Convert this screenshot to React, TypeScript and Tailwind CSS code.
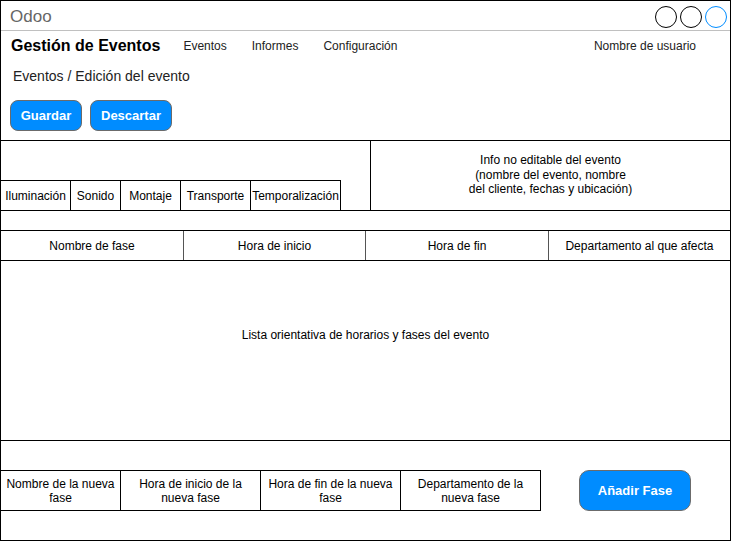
import React from 'react';

const tabs = [
    { label: 'Iluminación', w: 'w-[70px]' },
    { label: 'Sonido', w: 'w-[50px]' },
    { label: 'Montaje', w: 'w-[60px]' },
    { label: 'Transporte', w: 'w-[70px]' },
    { label: 'Temporalización', w: 'w-[90px]' },
];

const columns = [
    { label: 'Nombre de fase', w: 'w-[183px] border-r' },
    { label: 'Hora de inicio', w: 'w-[182px] border-r' },
    { label: 'Hora de fin', w: 'w-[183px] border-r' },
    { label: 'Departamento al que afecta', w: 'flex-1' },
];

const newPhase = [
    { label: ['Nombre de la nueva', 'fase'], w: 'w-[120px]' },
    { label: ['Hora de inicio de la', 'nueva fase'], w: 'w-[140px]' },
    { label: ['Hora de fin de la nueva', 'fase'], w: 'w-[140px]' },
    { label: ['Departamento de la', 'nueva fase'], w: 'w-[140px]' },
];

const App: React.FC = () => {
    return (
        <div className="w-[731px] h-[541px] border border-black bg-white flex flex-col text-black font-['Liberation_Sans',Arial,sans-serif]">
            {/* Window bar */}
            <div className="h-[30px] shrink-0 border-b border-[#c0c0c0] flex items-center justify-between pl-[9px] pr-[3px]">
                <span className="text-[17px] text-[#666666] leading-none mt-[1px]">Odoo</span>
                <div className="flex gap-[3px] mt-[2px]">
                    <div className="w-[22px] h-[22px] rounded-full border border-black"></div>
                    <div className="w-[22px] h-[22px] rounded-full border border-black"></div>
                    <div className="w-[22px] h-[22px] rounded-full border border-[#008cff]"></div>
                </div>
            </div>

            {/* Nav */}
            <div className="h-[29px] shrink-0 flex items-center pl-[10px] pr-[34px]">
                <span className="text-[16px] font-bold mr-[23px]">Gestión de Eventos</span>
                <div className="flex gap-[25px] text-[12px] text-[#222]">
                    <span>Eventos</span>
                    <span>Informes</span>
                    <span>Configuración</span>
                </div>
                <span className="ml-auto text-[12px] text-[#222]">Nombre de usuario</span>
            </div>

            {/* Breadcrumb */}
            <div className="h-[32px] shrink-0 flex items-center pl-[12px] text-[14px] text-[#222]">
                Eventos / Edición del evento
            </div>

            {/* Actions */}
            <div className="h-[48px] shrink-0 flex items-start gap-[8px] pl-[9px] pt-[8px]">
                <button className="w-[72px] h-[31px] rounded-[8px] bg-[#008cff] border border-[#6b6b6b] text-white text-[13px] font-bold">Guardar</button>
                <button className="w-[82px] h-[31px] rounded-[8px] bg-[#008cff] border border-[#6b6b6b] text-white text-[13px] font-bold">Descartar</button>
            </div>

            {/* Tabs + event info */}
            <div className="h-[71px] shrink-0 border-y border-black flex">
                <div className="w-[370px] border-r border-black flex flex-col justify-end">
                    <div className="flex h-[30px]">
                        {tabs.map(t => (
                            <div key={t.label} className={`${t.w} border-t border-r border-black flex items-center justify-center text-[12px] whitespace-nowrap`}>
                                {t.label}
                            </div>
                        ))}
                    </div>
                </div>
                <div className="flex-1 flex items-center justify-center text-center text-[12px] leading-[14.5px] pb-[1px]">
                    Info no editable del evento<br />(nombre del evento, nombre<br />del cliente, fechas y ubicación)
                </div>
            </div>

            <div className="h-[19px] shrink-0"></div>

            {/* Phase table header */}
            <div className="h-[31px] shrink-0 border-y border-black flex">
                {columns.map(c => (
                    <div key={c.label} className={`${c.w} border-[#555] flex items-center justify-center text-[12px]`}>
                        {c.label}
                    </div>
                ))}
            </div>

            {/* Phase list */}
            <div className="h-[179px] shrink-0 flex justify-center pt-[67px] text-[12px] leading-[14px]">
                Lista orientativa de horarios y fases del evento
            </div>

            <div className="h-[30px] shrink-0 border-t border-black"></div>

            {/* New phase form */}
            <div className="h-[41px] shrink-0 flex">
                {newPhase.map(p => (
                    <div key={p.label.join()} className={`${p.w} border-y border-r border-black flex flex-col items-center justify-center text-[12px] leading-[14px] text-center`}>
                        <span>{p.label[0]}</span>
                        <span>{p.label[1]}</span>
                    </div>
                ))}
                <button className="ml-[38px] w-[112px] h-[41px] rounded-[10px] bg-[#008cff] border border-[#6b6b6b] text-white text-[13px] font-bold">Añadir Fase</button>
            </div>

            <div className="flex-1"></div>
        </div>
    );
};

export default App;
